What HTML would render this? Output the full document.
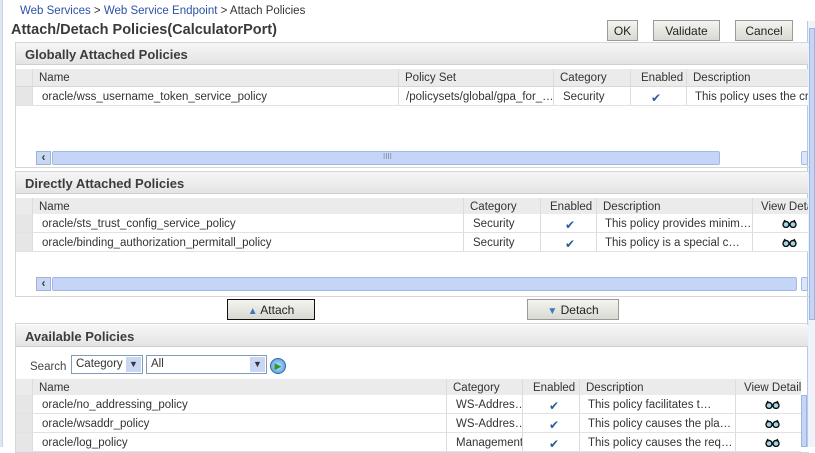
<!DOCTYPE html>
<html><head><meta charset="utf-8"><style>
*{margin:0;padding:0;box-sizing:border-box}
body{width:815px;height:447px;overflow:hidden;background:#fff;font-family:"Liberation Sans",sans-serif;font-size:11.5px;color:#333;position:relative}
.a{position:absolute;white-space:nowrap}
.lstrip{left:0;top:0;width:3px;height:447px;background:#dde6f3;border-right:1px solid #c8d3e3}
.bc{left:20px;top:5px;font-size:11.5px;color:#333}
.bc span{color:#2a52a8}
.title{left:11px;top:22px;font-size:14.5px;font-weight:bold;color:#3a3a3a}
.btn{height:21px;border:1px solid #9a9a9a;background:linear-gradient(#f4f4f0,#d9d9d2);text-align:center;line-height:20px;font-size:12px;color:#222}
.panel{left:15px;width:794px;border:1px solid #d6d6d6;border-right:none}
.hb{left:16px;width:792px;height:22px;background:linear-gradient(#f6f6f6,#e4e4e4);border-bottom:1px solid #cfcfcf;font-weight:bold;font-size:13px;color:#3c3c3c;padding:4px 0 0 9px}
.ch{height:18px;background:#ebebeb;border-bottom:1px solid #d8d8d8}
.cell{position:absolute;top:0;height:100%;padding:3px 0 0 6px;border-left:1px solid #dcdcdc;overflow:hidden;white-space:nowrap}
.row{height:19px;background:#fff;border-bottom:1px solid #e2e2e2}
.row .cell{padding-top:4px}
.sel{position:absolute;left:0;top:0;width:16px;height:100%;background:#e6e6e6}
.chk{color:#2b5d9a;font-size:12px}
.hs{height:14px}
.sarr{position:absolute;left:20px;top:0;width:15px;height:14px;background:#c9d7f3;border:1px solid #9fb2d8;font-size:12px;color:#344;text-align:center;line-height:11px;font-weight:bold}
.strk{position:absolute;top:0;height:14px;background:#c4d5f8;border:1px solid #a4b9e2;border-radius:2px}
.g{position:absolute;top:5px}
</style></head><body>
<svg width="0" height="0" style="position:absolute"><defs><symbol id="gl" viewBox="0 0 15 9"><path d="M1 5.5a3 3 0 1 0 6 0a3 3 0 1 0-6 0M8 5.5a3 3 0 1 0 6 0a3 3 0 1 0-6 0M7 5.5h1M1.5 4L3 1M13.5 4L12 1" fill="#9fd8e8" stroke="#111" stroke-width="1.4"/></symbol></defs></svg>
<div class="a lstrip"></div>
<div class="a bc"><span>Web Services</span> &gt; <span>Web Service Endpoint</span> &gt; Attach Policies</div>
<div class="a title">Attach/Detach Policies(CalculatorPort)</div>
<div class="a btn" style="left:607px;top:20px;width:31px">OK</div>
<div class="a btn" style="left:653px;top:20px;width:67px">Validate</div>
<div class="a btn" style="left:735px;top:20px;width:58px">Cancel</div>

<div class="a" style="left:807px;top:21px;width:8px;height:426px;background:#eef2fa;border-left:1px solid #b8c8e6"></div>
<div class="a" style="left:809px;top:28px;width:6px;height:292px;background:#c4d5f8;border:1px solid #9fb4de"></div>

<div class="a panel" style="top:42px;height:126px"></div>
<div class="a hb" style="top:43px">Globally Attached Policies</div>
<div class="a ch" style="left:16px;top:69px;width:792px">
<div class="sel" style="background:#ebebeb"></div>
<div class="cell" style="left:16px;width:366px">Name</div>
<div class="cell" style="left:382px;width:155px">Policy Set</div>
<div class="cell" style="left:537px;width:77px">Category</div>
<div class="cell" style="left:614px;width:56px;padding-left:10px">Enabled</div>
<div class="cell" style="left:670px;width:122px">Description</div>
</div>
<div class="a row" style="left:16px;top:87px;width:792px">
<div class="sel"></div>
<div class="cell" style="left:16px;width:366px;padding-left:9px">oracle/wss_username_token_service_policy</div>
<div class="cell" style="left:382px;width:155px;padding-left:7px">/policysets/global/gpa_for_…</div>
<div class="cell" style="left:537px;width:77px;padding-left:9px">Security</div>
<div class="cell chk" style="left:614px;width:56px;padding-left:20px">✔</div>
<div class="cell" style="left:670px;width:122px;padding-left:8px">This policy uses the cred</div>
</div>
<div class="a hs" style="left:16px;top:151px;width:792px">
<div class="sarr">&lsaquo;</div><div class="strk" style="left:36px;width:668px"><span style="position:absolute;left:330px;top:0;font-size:8px;color:#889">IIII</span></div>
<div class="strk" style="left:785px;width:7px;background:#dde6f8"></div>
</div>

<div class="a panel" style="top:171px;height:126px"></div>
<div class="a hb" style="top:172px">Directly Attached Policies</div>
<div class="a ch" style="left:16px;top:198px;width:792px">
<div class="sel" style="background:#ebebeb"></div>
<div class="cell" style="left:16px;width:431px">Name</div>
<div class="cell" style="left:447px;width:77px">Category</div>
<div class="cell" style="left:524px;width:56px;padding-left:9px">Enabled</div>
<div class="cell" style="left:580px;width:156px">Description</div>
<div class="cell" style="left:736px;width:56px;padding-left:8px">View Detail</div>
</div>
<div class="a row" style="left:16px;top:214px;width:792px">
<div class="sel"></div>
<div class="cell" style="left:16px;width:431px;padding-left:9px">oracle/sts_trust_config_service_policy</div>
<div class="cell" style="left:447px;width:77px;padding-left:9px">Security</div>
<div class="cell chk" style="left:524px;width:56px;padding-left:24px">✔</div>
<div class="cell" style="left:580px;width:156px;padding-left:8px">This policy provides minim…</div>
<div class="cell" style="left:736px;width:56px"><svg class="g" style="left:29px" width="15" height="9"><use href="#gl"/></svg></div>
</div>
<div class="a row" style="left:16px;top:233px;width:792px">
<div class="sel"></div>
<div class="cell" style="left:16px;width:431px;padding-left:9px">oracle/binding_authorization_permitall_policy</div>
<div class="cell" style="left:447px;width:77px;padding-left:9px">Security</div>
<div class="cell chk" style="left:524px;width:56px;padding-left:24px">✔</div>
<div class="cell" style="left:580px;width:156px;padding-left:8px">This policy is a special c…</div>
<div class="cell" style="left:736px;width:56px"><svg class="g" style="left:29px" width="15" height="9"><use href="#gl"/></svg></div>
</div>
<div class="a hs" style="left:16px;top:277px;width:792px">
<div class="sarr">&lsaquo;</div><div class="strk" style="left:36px;width:745px"></div>
<div class="strk" style="left:785px;width:7px;background:#dde6f8"></div>
</div>

<div class="a btn" style="left:227px;top:299px;width:88px;border:1px solid #111"><span style="color:#3a77c4;font-size:10px">▲</span> Attach</div>
<div class="a btn" style="left:527px;top:299px;width:92px"><span style="color:#3a77c4;font-size:10px">▼</span> Detach</div>

<div class="a panel" style="top:323px;height:130px"></div>
<div class="a hb" style="top:325px">Available Policies</div>
<div class="a" style="left:30px;top:361px;color:#444">Search</div>
<div class="a" style="left:71px;top:355px;width:72px;height:19px;border:1px solid #7f9db9;padding:2px 0 0 4px;background:#fff">Category<span style="position:absolute;right:1px;top:1px;width:15px;height:15px;background:#c9d7f3;font-size:9px;text-align:center;line-height:15px;color:#334">▼</span></div>
<div class="a" style="left:146px;top:355px;width:121px;height:19px;border:1px solid #7f9db9;padding:2px 0 0 4px;background:#fff">All<span style="position:absolute;right:1px;top:1px;width:15px;height:15px;background:#c9d7f3;font-size:9px;text-align:center;line-height:15px;color:#334">▼</span></div>
<div class="a" style="left:270px;top:358px;width:16px;height:16px;border-radius:50%;background:radial-gradient(#bfe3ff,#4a92d8);border:1px solid #2d6aa8;color:#2a9a2a;font-size:9px;text-align:center;line-height:14px">▶</div>
<div class="a ch" style="left:16px;top:379px;width:785px">
<div class="sel" style="background:#ebebeb"></div>
<div class="cell" style="left:16px;width:414px">Name</div>
<div class="cell" style="left:430px;width:76px">Category</div>
<div class="cell" style="left:506px;width:57px;padding-left:10px">Enabled</div>
<div class="cell" style="left:563px;width:156px">Description</div>
<div class="cell" style="left:719px;width:66px;padding-left:8px">View Detail</div>
</div>
<div class="a row" style="left:16px;top:395px;width:785px">
<div class="sel"></div>
<div class="cell" style="left:16px;width:414px;padding-left:9px">oracle/no_addressing_policy</div>
<div class="cell" style="left:430px;width:76px;padding-left:9px">WS-Addres…</div>
<div class="cell chk" style="left:506px;width:57px;padding-left:26px">✔</div>
<div class="cell" style="left:563px;width:156px;padding-left:8px">This policy facilitates t…</div>
<div class="cell" style="left:719px;width:66px"><svg class="g" style="left:29px" width="15" height="9"><use href="#gl"/></svg></div>
</div>
<div class="a row" style="left:16px;top:414px;width:785px">
<div class="sel"></div>
<div class="cell" style="left:16px;width:414px;padding-left:9px">oracle/wsaddr_policy</div>
<div class="cell" style="left:430px;width:76px;padding-left:9px">WS-Addres…</div>
<div class="cell chk" style="left:506px;width:57px;padding-left:26px">✔</div>
<div class="cell" style="left:563px;width:156px;padding-left:8px">This policy causes the pla…</div>
<div class="cell" style="left:719px;width:66px"><svg class="g" style="left:29px" width="15" height="9"><use href="#gl"/></svg></div>
</div>
<div class="a row" style="left:16px;top:433px;width:785px">
<div class="sel"></div>
<div class="cell" style="left:16px;width:414px;padding-left:9px">oracle/log_policy</div>
<div class="cell" style="left:430px;width:76px;padding-left:9px">Management</div>
<div class="cell chk" style="left:506px;width:57px;padding-left:26px">✔</div>
<div class="cell" style="left:563px;width:156px;padding-left:8px">This policy causes the req…</div>
<div class="cell" style="left:719px;width:66px"><svg class="g" style="left:29px" width="15" height="9"><use href="#gl"/></svg></div>
</div>
<div class="a" style="left:801px;top:395px;width:6px;height:52px;background:#c4d5f8;border:1px solid #9fb4de"></div>
</body></html>
